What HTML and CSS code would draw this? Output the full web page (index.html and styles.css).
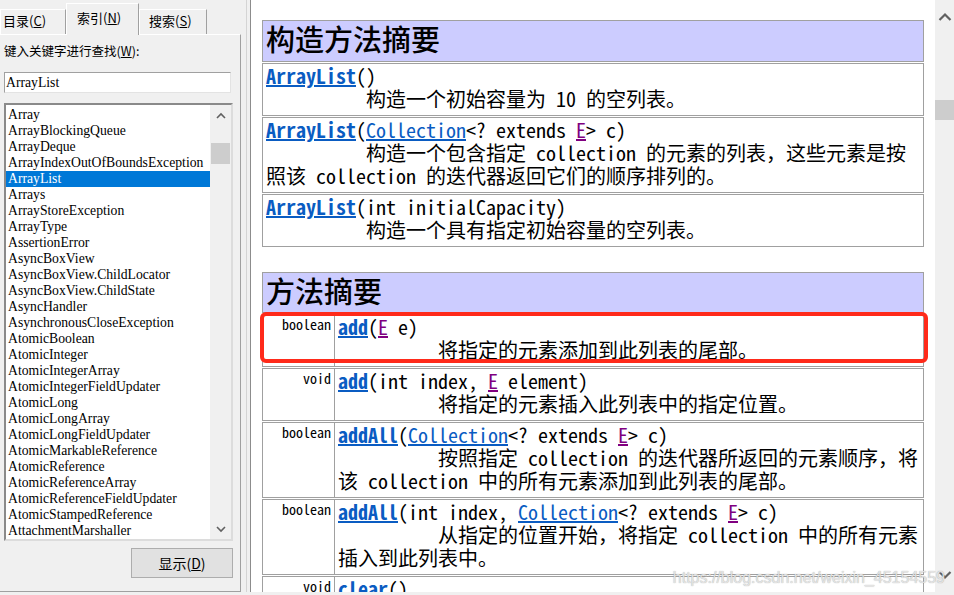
FILE: index.html
```html
<!DOCTYPE html>
<html lang="zh-CN">
<head>
<meta charset="utf-8">
<title>ArrayList</title>
<link rel="stylesheet" href="styles.css">
</head>
<body>
<div class="app">
  <aside class="nav">
    <div class="tabs">
      <div class="tab t1">目录(<u>C</u>)</div>
      <div class="tab t2 active">索引(<u>N</u>)</div>
      <div class="tab t3">搜索(<u>S</u>)</div>
    </div>
    <div class="pane">
      <label class="prompt">键入关键字进行查找(<u>W</u>):</label>
      <div class="search">ArrayList</div>
      <div class="listbox">
        <ul class="items">
          <li>Array</li>
          <li>ArrayBlockingQueue</li>
          <li>ArrayDeque</li>
          <li>ArrayIndexOutOfBoundsException</li>
          <li class="sel">ArrayList</li>
          <li>Arrays</li>
          <li>ArrayStoreException</li>
          <li>ArrayType</li>
          <li>AssertionError</li>
          <li>AsyncBoxView</li>
          <li>AsyncBoxView.ChildLocator</li>
          <li>AsyncBoxView.ChildState</li>
          <li>AsyncHandler</li>
          <li>AsynchronousCloseException</li>
          <li>AtomicBoolean</li>
          <li>AtomicInteger</li>
          <li>AtomicIntegerArray</li>
          <li>AtomicIntegerFieldUpdater</li>
          <li>AtomicLong</li>
          <li>AtomicLongArray</li>
          <li>AtomicLongFieldUpdater</li>
          <li>AtomicMarkableReference</li>
          <li>AtomicReference</li>
          <li>AtomicReferenceArray</li>
          <li>AtomicReferenceFieldUpdater</li>
          <li>AtomicStampedReference</li>
          <li>AttachmentMarshaller</li>
        </ul>
        <div class="sbar small">
          <div class="arrow"><svg width="10" height="7" viewBox="0 0 10 7"><polyline points="1,6 5,2 9,6" fill="none" stroke="#606060" stroke-width="1.6"/></svg></div>
          <div class="thumb"></div>
          <div class="arrow down"><svg width="10" height="7" viewBox="0 0 10 7"><polyline points="1,1 5,5 9,1" fill="none" stroke="#606060" stroke-width="1.6"/></svg></div>
        </div>
      </div>
      <div class="actions"><button class="btn">显示(<u>D</u>)</button></div>
    </div>
  </aside>
  <div class="splitter"><span></span></div>
  <main class="doc">
    <table class="summary ctor">
      <tr><th>构造方法摘要</th></tr>
      <tr><td><code><b><a class="m" href="#">ArrayList</a></b>()</code><br>&nbsp;&nbsp;&nbsp;&nbsp;&nbsp;&nbsp;&nbsp;&nbsp;&nbsp;&nbsp;构造一个初始容量为 10 的空列表。</td></tr>
      <tr><td><code><b><a class="m" href="#">ArrayList</a></b>(<a class="t" href="#">Collection</a>&lt;? extends <a class="v" href="#">E</a>&gt; c)</code><br>&nbsp;&nbsp;&nbsp;&nbsp;&nbsp;&nbsp;&nbsp;&nbsp;&nbsp;&nbsp;构造一个包含指定 collection 的元素的列表，这些元素是按照该 collection 的迭代器返回它们的顺序排列的。</td></tr>
      <tr><td><code><b><a class="m" href="#">ArrayList</a></b>(int&nbsp;initialCapacity)</code><br>&nbsp;&nbsp;&nbsp;&nbsp;&nbsp;&nbsp;&nbsp;&nbsp;&nbsp;&nbsp;构造一个具有指定初始容量的空列表。</td></tr>
    </table>
    <div class="wrap">
      <table class="summary methods">
        <tr><th colspan="2">方法摘要</th></tr>
        <tr><td class="type"><code>boolean</code></td><td class="sig"><code><b><a class="m" href="#">add</a></b>(<a class="v" href="#">E</a>&nbsp;e)</code><br>&nbsp;&nbsp;&nbsp;&nbsp;&nbsp;&nbsp;&nbsp;&nbsp;&nbsp;&nbsp;将指定的元素添加到此列表的尾部。</td></tr>
        <tr><td class="type"><code>void</code></td><td class="sig"><code><b><a class="m" href="#">add</a></b>(int&nbsp;index, <a class="v" href="#">E</a>&nbsp;element)</code><br>&nbsp;&nbsp;&nbsp;&nbsp;&nbsp;&nbsp;&nbsp;&nbsp;&nbsp;&nbsp;将指定的元素插入此列表中的指定位置。</td></tr>
        <tr><td class="type"><code>boolean</code></td><td class="sig"><code><b><a class="m" href="#">addAll</a></b>(<a class="t" href="#">Collection</a>&lt;? extends <a class="v" href="#">E</a>&gt;&nbsp;c)</code><br>&nbsp;&nbsp;&nbsp;&nbsp;&nbsp;&nbsp;&nbsp;&nbsp;&nbsp;&nbsp;按照指定 collection 的迭代器所返回的元素顺序，将该 collection 中的所有元素添加到此列表的尾部。</td></tr>
        <tr><td class="type"><code>boolean</code></td><td class="sig"><code><b><a class="m" href="#">addAll</a></b>(int&nbsp;index, <a class="t" href="#">Collection</a>&lt;? extends <a class="v" href="#">E</a>&gt;&nbsp;c)</code><br>&nbsp;&nbsp;&nbsp;&nbsp;&nbsp;&nbsp;&nbsp;&nbsp;&nbsp;&nbsp;从指定的位置开始，将指定 collection 中的所有元素插入到此列表中。</td></tr>
        <tr><td class="type"><code>void</code></td><td class="sig"><code><b><a class="m" href="#">clear</a></b>()</code><br>&nbsp;&nbsp;&nbsp;&nbsp;&nbsp;&nbsp;&nbsp;&nbsp;&nbsp;&nbsp;移除此列表中的所有元素。</td></tr>
      </table>
      <div class="hl"></div>
    </div>
  </main>
  <div class="sbar main">
    <div class="arrow"><svg width="14" height="9" viewBox="0 0 14 9"><polyline points="1.5,8 7,2.5 12.5,8" fill="none" stroke="#606060" stroke-width="2.2"/></svg></div>
    <div class="thumb"></div>
    <div class="arrow down"><svg width="14" height="9" viewBox="0 0 14 9"><polyline points="1.5,1 7,6.5 12.5,1" fill="none" stroke="#606060" stroke-width="2.2"/></svg></div>
  </div>
  <div class="wm">https://blog.csdn.net/weixin_45154559</div>
</div>
</body>
</html>
```
FILE: styles.css
```css
* { box-sizing: border-box; }
html, body { margin: 0; padding: 0; }
body {
  width: 954px;
  height: 595px;
  overflow: hidden;
  background: #f0f0f0;
  font-family: "Noto Sans CJK SC", sans-serif;
  color: #000;
}
.app { display: flex; height: 592px; position: relative; }

/* ---------- left navigation ---------- */
.nav { width: 241px; flex: none; display: flex; flex-direction: column; }
.tabs { height: 34px; display: flex; align-items: flex-end; position: relative; z-index: 1; }
.tab {
  height: 25px;
  border: 1px solid;
  border-color: #fff #a0a0a0 transparent #fff;
  border-bottom: none;
  font-size: 13px;
  line-height: 22px;
  white-space: nowrap;
}
.t1 { width: 66px; padding-left: 2px; }
.t2 { width: 73px; padding-left: 10px; }
.t3 { width: 68px; padding-left: 9px; }
.tab.active {
  height: 32px;
  line-height: 28px;
  margin-bottom: -1px;
  background: #f0f0f0;
}
.pane {
  flex: 1;
  border-top: 1px solid #fff;
  border-right: 1px solid #a0a0a0;
  border-bottom: 1px solid #a0a0a0;
  display: flex;
  flex-direction: column;
  padding-left: 4px;
}
.prompt { display: block; margin-top: 7px; font-size: 12.5px; line-height: 18px; }
.search {
  margin-top: 12px;
  width: 227px;
  height: 21px;
  background: #fff;
  border: 1px solid #a0a0a0;
  border-color: #a0a0a0 #e3e3e3 #e3e3e3 #a0a0a0;
  padding-left: 1px;
  font-family: "Liberation Serif", serif;
  font-size: 13.7px;
  line-height: 19px;
}
.listbox {
  margin-top: 10px;
  width: 229px;
  height: 438px;
  display: flex;
  border: 2px solid;
  border-color: #8a8a8a #dcdcdc #dcdcdc #8a8a8a;
  background: #fff;
}
.items {
  list-style: none;
  margin: 0;
  padding: 2px 0 0;
  width: 204px;
  flex: none;
  overflow: hidden;
}
.items li {
  height: 16px;
  line-height: 16px;
  padding-left: 2px;
  font-family: "Liberation Serif", serif;
  font-size: 13.7px;
  white-space: nowrap;
}
.items li.sel { background: #0078d7; color: #fff; }

.sbar { display: flex; flex-direction: column; align-items: center; background: #f0f0f0; }
.sbar.small { flex: 1; }
.sbar .arrow { display: flex; align-items: center; justify-content: center; width: 100%; }
.sbar.small .arrow { height: 20px; }
.sbar.small .thumb { margin-top: 18px; width: 19px; height: 21px; background: #cdcdcd; }
.sbar .arrow.down { margin-top: auto; }

.actions { display: flex; justify-content: flex-end; margin-top: 7px; padding-right: 7px; }
.btn {
  width: 102px;
  height: 30px;
  background: #e1e1e1;
  border: 1px solid #adadad;
  font-family: "Noto Sans CJK SC", sans-serif;
  font-size: 14px;
  color: #000;
  padding: 0;
}

/* ---------- splitter ---------- */
.splitter { width: 9px; flex: none; display: flex; }
.splitter span { margin-left: 5px; width: 1px; background: #d4d4d4; }

/* ---------- document ---------- */
.doc {
  width: 685px;
  flex: none;
  background: #fff;
  border-left: 1px solid #8c8c8c;
  overflow: hidden;
  padding: 19px 11px 0;
}
.summary {
  width: 662px;
  border-collapse: separate;
  border-spacing: 0 1px;
  font-family: "Noto Sans Mono CJK SC", "Liberation Mono", monospace;
  font-size: 20px;
  line-height: 23px;
}
.summary code { font-family: inherit; }
.summary code, .summary a, .summary b { line-height: 1; }
.summary th {
  height: 42px;
  background: #ccccff;
  border: 1px solid #a0a0a0;
  padding: 0 3px 6px;
  text-align: left;
  font-family: "Noto Sans CJK SC", sans-serif;
  font-size: 29px;
  line-height: 34px;
  font-weight: 500;
}
.methods th { height: 41px; padding-bottom: 5px; }
.summary td {
  border: 1px solid #a0a0a0;
  padding: 0 3px 5px;
  vertical-align: top;
}
.summary a { color: #0a5cc2; text-decoration: underline; }
.summary a.m { font-weight: bold; }
.summary a.v { color: #800080; }
.methods td.type {
  width: 72px;
  border-right: none;
  text-align: right;
  font-size: 14px;
  line-height: 14px;
  padding: 2px 3px 3px 3px;
  white-space: nowrap;
}
.methods td.sig { padding: 0 1px 5px 3px; }
.wrap { position: relative; margin-top: 23px; width: 662px; }
.hl {
  position: absolute;
  left: -2px;
  top: 41px;
  width: 668px;
  height: 51px;
  border: 4px solid #ff2a1a;
  border-radius: 6px;
}

/* ---------- main scrollbar ---------- */
.sbar.main { width: 19px; flex: none; }
.sbar.main .arrow { height: 17px; margin-top: 8px; }
.sbar.main .thumb { margin-top: 75px; width: 19px; height: 20px; background: #cdcdcd; }
.sbar.main .arrow.down { margin-top: auto; margin-bottom: 8px; }

.wm {
  position: absolute;
  right: 9px;
  bottom: 5px;
  font-family: "Liberation Sans", sans-serif;
  font-size: 16px;
  line-height: 18px;
  color: rgba(235, 235, 235, 0.9);
  text-shadow: 0 0 1px rgba(90, 90, 90, 0.6);
}
```
